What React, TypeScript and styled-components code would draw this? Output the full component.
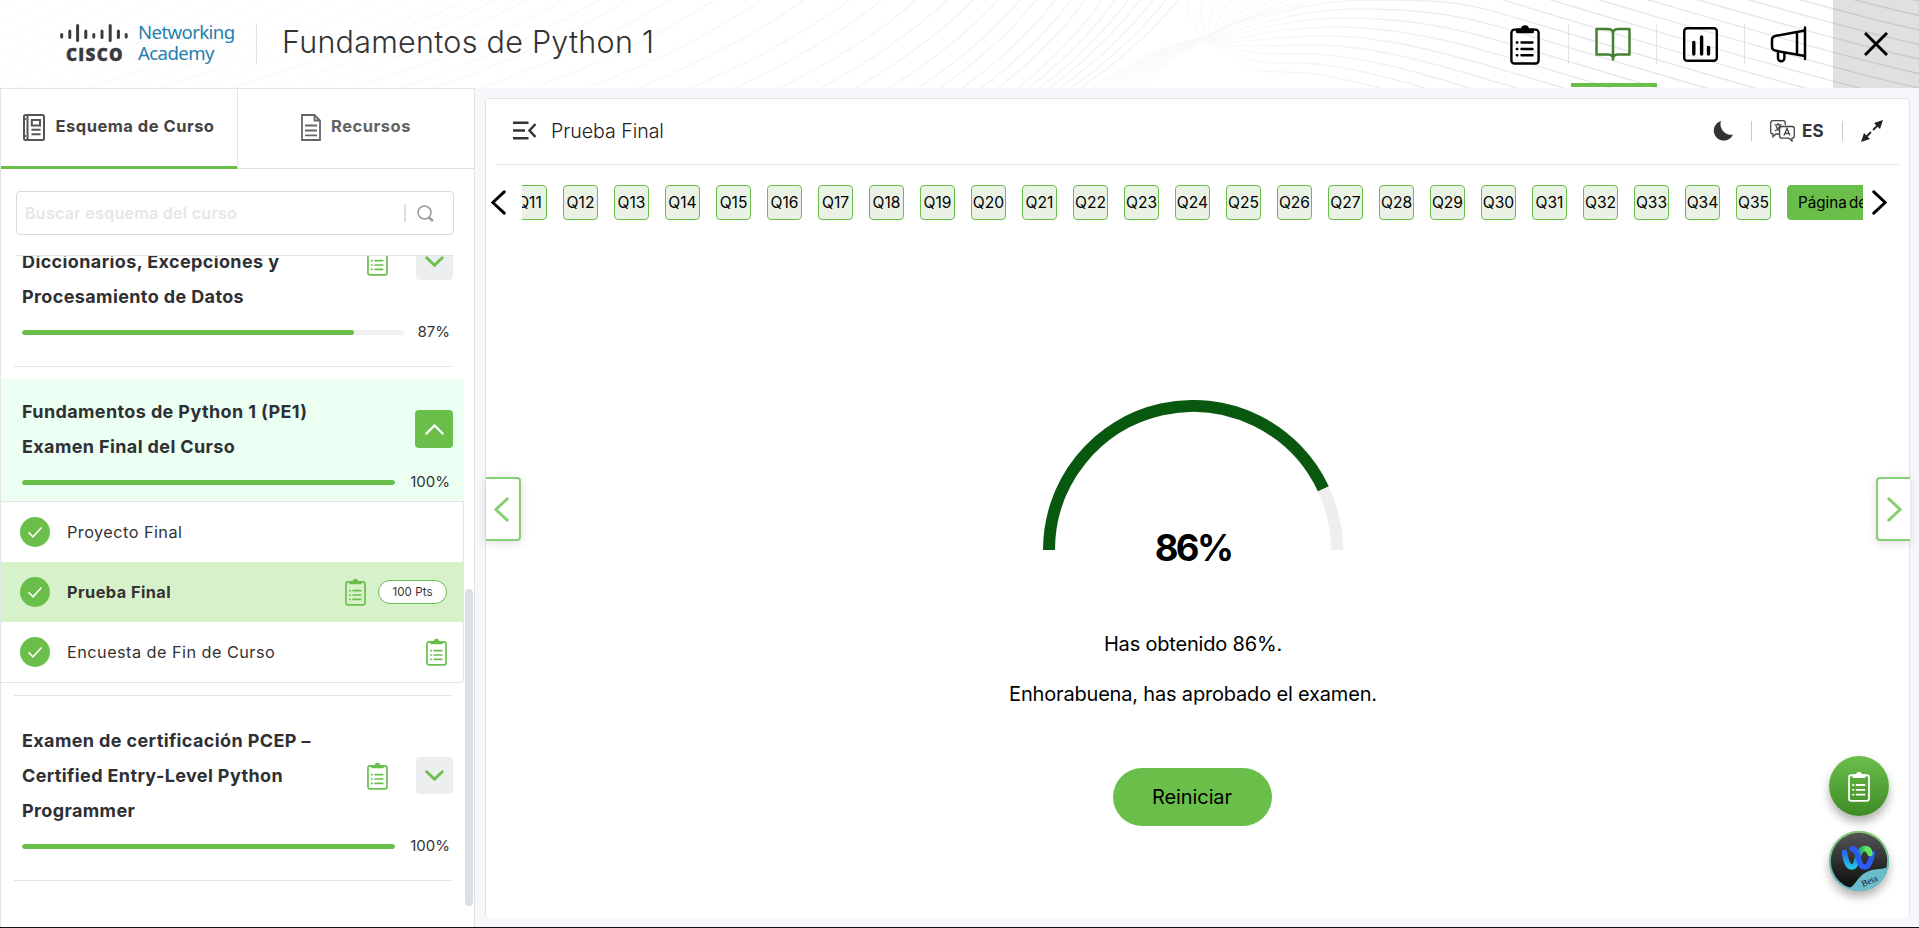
import React from "react";
import styled, { createGlobalStyle, css } from "styled-components";

const GREEN = "#6abf4b";
const LINE = "#e3e4e6";

const GlobalStyle = createGlobalStyle`
  * { box-sizing: border-box; }
  body { margin: 0; background: #f5f7fa; font-family: Inter, "Liberation Sans", sans-serif; color: #333; }
  button { font-family: inherit; padding: 0; }
`;

const Page = styled.div`
  display: flex;
  flex-direction: column;
  height: 928px;
  overflow: hidden;
  border-bottom: 1px solid #111;
`;

/* ---------- header ---------- */

const Header = styled.header`
  position: relative;
  display: flex;
  flex: none;
  height: 88px;
  background: #fff;
  padding-left: 60px;
`;

const HeaderWaves = styled.svg`
  position: absolute;
  inset: 0;
  width: 1919px;
  height: 88px;
`;

const Brand = styled.div`
  position: relative;
  display: flex;
  height: 40px;
  width: 197px;
  margin-top: 24px;
  border-right: 1px solid #dfe1e3;
`;

const CiscoMark = styled.div`
  width: 68px;
  margin-right: 10px;
  svg { display: block; }
`;

const CiscoWord = styled.div`
  font: 800 17px/18px "Open Sans", sans-serif;
  letter-spacing: 1.3px;
  color: #3b3b3d;
  -webkit-text-stroke: 0.4px #3b3b3d;
  padding-left: 6px;
  margin-top: 2px;
`;

const Academy = styled.div`
  font: 400 18.6px/21px "Noto Sans", sans-serif;
  letter-spacing: -0.6px;
  color: #1f80ad;
  margin-top: -3px;
  white-space: nowrap;
`;

const CourseTitle = styled.h1`
  position: relative;
  flex: 1;
  margin: 0 0 0 25px;
  font-size: 30.5px;
  font-weight: 300;
  line-height: 84px;
  letter-spacing: 0.26px;
  color: #333;
`;

const Nav = styled.nav`
  position: relative;
  display: flex;
`;

const NavItem = styled.button<{ $active?: boolean }>`
  position: relative;
  display: flex;
  align-items: center;
  justify-content: center;
  width: 88px;
  height: 88px;
  border: 0;
  background: none;
  color: ${(p) => (p.$active ? "#468033" : "#000")};
  &:nth-child(n + 3) { padding-right: 2px; }
  &:not(:nth-child(4))::after {
    content: "";
    position: absolute;
    right: 0;
    top: 24px;
    width: 1px;
    height: 40px;
    background: #e1e3e5;
  }
  ${(p) =>
    p.$active &&
    css`
      &::before {
        content: "";
        position: absolute;
        left: 2px;
        right: 0;
        bottom: 1px;
        height: 4px;
        background: ${GREEN};
      }
    `}
`;

const CloseButton = styled.button`
  display: flex;
  align-items: center;
  justify-content: center;
  width: 86px;
  height: 88px;
  border: 0;
  background: rgba(0, 0, 0, 0.12);
`;

/* ---------- sidebar ---------- */

const Body = styled.div`
  display: flex;
  flex: 1;
  min-height: 0;
`;

const Sidebar = styled.aside`
  position: relative;
  display: flex;
  flex-direction: column;
  flex: none;
  width: 475px;
  background: #fff;
  border: 1px solid ${LINE};
  border-bottom: 0;
`;

const Tabs = styled.div`
  display: flex;
  height: 80px;
`;

const Tab = styled.button<{ $active?: boolean }>`
  display: flex;
  align-items: center;
  justify-content: center;
  flex: 1;
  gap: 10px;
  border: 0;
  padding-bottom: ${(p) => (p.$active ? "1px" : "3px")};
  background: none;
  font-size: 16.5px;
  font-weight: 700;
  letter-spacing: 0.5px;
  color: ${(p) => (p.$active ? "#444" : "#636363")};
  border-bottom: ${(p) => (p.$active ? `3px solid ${GREEN}` : "1px solid #dcdfe6")};
  & + & { border-left: 1px solid ${LINE}; }
`;

const TabLabel = styled.span`
  padding-bottom: 2px;
`;

const SearchBox = styled.div`
  display: flex;
  align-items: center;
  height: 44px;
  width: 438px;
  margin: 22px 0 0 15px;
  padding: 0 19px 0 8px;
  border: 1px solid #d9dadc;
  border-radius: 4px;
  font-size: 16px;
  font-weight: 600;
  letter-spacing: 0.3px;
  color: #e6e6e6;
`;

const SearchText = styled.span`
  flex: 1;
`;

const SearchBar = styled.span`
  width: 2px;
  height: 18px;
  margin-right: 11px;
  background: #e0e0e0;
`;

const Outline = styled.div`
  flex: 1;
  min-height: 0;
  overflow: hidden;
  margin-top: 20px;
`;

const OutlineTop = styled.div`
  height: 1px;
  width: 438px;
  margin: 0 0 0 15px;
  background: ${LINE};
`;

const OutlineScroll = styled.div`
  height: 671px;
  overflow: hidden;
`;

const Module = styled.section<{ $open?: boolean; $scrolled?: boolean }>`
  width: 463px;
  padding: 15px 10px 0 21px;
  background: ${(p) => (p.$open ? "#ebfff3" : "#fff")};
  margin-top: ${(p) => (p.$scrolled ? "-62px" : "0")};
`;

const ModuleHead = styled.div`
  display: flex;
  align-items: center;
`;

const ModuleTitle = styled.h2<{ $continued?: boolean }>`
  flex: 1;
  margin: 0;
  padding-top: ${(p) => (p.$continued ? "35px" : "0")};
  font-size: 18px;
  font-weight: 700;
  line-height: 35px;
  letter-spacing: 0.38px;
  white-space: nowrap;
  color: #2f3033;
`;

const Toggle = styled.button<{ $open?: boolean }>`
  display: flex;
  align-items: center;
  justify-content: center;
  width: ${(p) => (p.$open ? "38px" : "37px")};
  height: ${(p) => (p.$open ? "38px" : "37px")};
  margin: 0 1px 0 28px;
  border: 0;
  border-radius: 4px;
  background: ${(p) => (p.$open ? GREEN : "#edeef0")};
  color: ${(p) => (p.$open ? "#fff" : GREEN)};
`;

const ProgressRow = styled.div`
  display: flex;
  align-items: center;
  height: 37px;
  padding-right: 4px;
`;

const Track = styled.div`
  flex: 1;
  height: 5px;
  border-radius: 3px;
  background: #f0f0f0;
  overflow: hidden;
`;

const Fill = styled.div`
  height: 100%;
  border-radius: 3px;
  background: ${GREEN};
`;

const Percent = styled.span<{ $full: boolean }>`
  width: ${(p) => (p.$full ? "55px" : "46px")};
  padding-bottom: 3px;
  text-align: right;
  font-size: 15px;
`;

const Rule = styled.hr`
  width: 438px;
  height: 1px;
  margin: 15px 0 12px 13px;
  border: 0;
  background: ${LINE};
`;

const Lessons = styled.div`
  width: 463px;
  height: 182px;
  border: 1px solid ${LINE};
  border-left: 0;
  border-radius: 0 0 4px 0;
  & + hr { margin-top: 12px; }
`;

const Lesson = styled.div<{ $current?: boolean }>`
  display: flex;
  align-items: center;
  height: 60px;
  padding: 0 16px 0 19px;
  font-size: 16.3px;
  letter-spacing: 0.45px;
  font-weight: ${(p) => (p.$current ? 700 : 400)};
  background: ${(p) => (p.$current ? "#d7f2ca" : "transparent")};
`;

const LessonName = styled.span`
  flex: 1;
  margin-left: 17px;
`;

const Points = styled.span`
  display: flex;
  align-items: center;
  justify-content: center;
  width: 69px;
  height: 24px;
  margin-left: 12px;
  border: 1px solid ${GREEN};
  border-radius: 12px;
  background: #fff;
  font-size: 11.5px;
  letter-spacing: 0.1px;
  font-weight: 400;
`;

const Scrollbar = styled.div`
  position: absolute;
  right: 1px;
  top: 500px;
  width: 8px;
  height: 317px;
  border-radius: 4px;
  background: #dcdfe6;
`;

/* ---------- main card ---------- */

const Card = styled.main`
  position: relative;
  display: flex;
  flex-direction: column;
  width: 1425px;
  height: 820px;
  margin: 10px 0 0 10px;
  border: 1px solid ${LINE};
  border-bottom: 0;
  border-radius: 4px;
  background: #fff;
`;

const CardBar = styled.div`
  display: flex;
  align-items: center;
  height: 66px;
  margin: 0 10px;
  padding: 0 16px 2px 17px;
  border-bottom: 1px solid ${LINE};
`;

const PageName = styled.div`
  flex: 1;
  margin-left: 14px;
  font-size: 19.6px;
  font-weight: 300;
  letter-spacing: -0.05px;
  color: #222;
`;

const Tool = styled.span`
  display: flex;
  align-items: center;
  gap: 7px;
  font-size: 17px;
  font-weight: 700;
  letter-spacing: 0.3px;
`;

const ToolDivider = styled.span`
  width: 1px;
  height: 20px;
  margin: 0 18px;
  background: #c9cacc;
`;

const QuestionNav = styled.div`
  display: flex;
  align-items: center;
  height: 75px;
  padding: 0 22px 0 5px;
  color: #000;
`;

const QuestionStrip = styled.div`
  display: flex;
  flex: none;
  gap: 16px;
  width: 1341px;
  margin-left: 16px;
  margin-right: auto;
  overflow: hidden;
`;

const Question = styled.button<{ $final?: boolean; $cut?: boolean }>`
  flex: none;
  width: ${(p) => (p.$final ? "170px" : "35px")};
  height: 35px;
  margin-left: ${(p) => (p.$cut ? "-10px" : "0")};
  padding-left: ${(p) => (p.$final ? "10px" : "0")};
  text-align: ${(p) => (p.$final ? "left" : "center")};
  border: 1px solid ${GREEN};
  border-radius: 4px;
  background: ${(p) => (p.$final ? GREEN : "#eaf2e6")};
  color: #000;
  font-size: ${(p) => (p.$final ? "15.2px" : "15.6px")};
  word-spacing: ${(p) => (p.$final ? "-2px" : "0")};
  white-space: nowrap;
`;

const Result = styled.div`
  display: flex;
  flex-direction: column;
  align-items: center;
  width: 1414px;
  padding-top: 160px;
  color: #000;
`;

const Score = styled.div`
  height: 50px;
  margin-top: -27px;
  line-height: 50px;
  font-size: 36.5px;
  font-weight: 700;
  letter-spacing: -2.6px;
`;

const Message = styled.p`
  margin: 0;
  height: 50px;
  line-height: 50px;
  font-size: 20px;
  letter-spacing: -0.18px;
  &:first-of-type { margin-top: 46px; }
`;

const Restart = styled.button`
  width: 159px;
  height: 58px;
  margin: 49px 2px 0 0;
  border: 0;
  border-radius: 29px;
  background: ${GREEN};
  color: #000;
  font-size: 20px;
  letter-spacing: -0.1px;
`;

const Pager = styled.button<{ $side: "left" | "right" }>`
  position: absolute;
  top: 378px;
  ${(p) => p.$side}: ${(p) => (p.$side === "left" ? "0" : "-1px")};
  display: flex;
  align-items: center;
  justify-content: center;
  width: ${(p) => (p.$side === "left" ? "35px" : "34px")};
  height: 64px;
  padding-right: ${(p) => (p.$side === "left" ? "2px" : "0")};
  border: 2px solid #87cf74;
  border-${(p) => p.$side}: 0;
  border-radius: ${(p) => (p.$side === "left" ? "0 4px 4px 0" : "4px 0 0 4px")};
  background: #fff;
  color: #87cf74;
  box-shadow: 0 2px 10px rgba(0, 0, 0, 0.14);
`;

const Floating = styled.div`
  position: absolute;
  right: 20px;
  top: 657px;
  display: flex;
  flex-direction: column;
  gap: 15px;
`;

const Fab = styled.button`
  display: flex;
  align-items: center;
  justify-content: center;
  width: 60px;
  height: 60px;
  border: 0;
  border-radius: 50%;
  background: linear-gradient(#6abf4b, #3f8a26);
  box-shadow: 0 6px 10px rgba(0, 0, 0, 0.3);
`;

/* ---------- drawings ---------- */

/* x at the top edge of the header -> x at its bottom edge, for the sweeping lines */
const SWEEP = [[0, -230], [465, 230], [599, 400], [849, 690], [999, 890], [1036, 940], [1102, 1018], [1180, 1082], [1290, 1138]];

const sweepBottom = (t: number) => {
  const i = Math.max(1, SWEEP.findIndex(([x]) => x >= t));
  const [x0, y0] = SWEEP[i - 1];
  const [x1, y1] = SWEEP[i];
  return y0 + ((t - x0) / (x1 - x0)) * (y1 - y0);
};

const Waves = () => {
  const tops = [465, 495, 526, 563, 599, 628, 669, 714, 761, 804, 849, 882, 916, 947, 973, 998, 1020, 1036, 1055, 1071, 1085, 1102, 1115, 1128, 1140, 1153, 1166, 1178];
  const left = tops.map((t) => {
    const b = sweepBottom(t);
    return `M${b} 88Q${b + (t - b) * 0.62} 46 ${t} 0`;
  });
  const knot = Array.from({ length: 10 }, (_, i) => {
    const t = 1190 + i * 13;
    return `M${1090 + i * 5.3} 88C${1140 + i * 4} ${58 - i * 0.8} ${1172 + i * 3} ${42 + i * 0.4} ${1192 + i * 3} ${41 - i}S${t - 12} 8 ${t + i} 0`;
  });
  const far = Array.from({ length: 13 }, (_, i) => `M${i * 36 - 200} 88Q${i * 36 - 70} 46 ${i * 36 + 10} 0`);
  const right = Array.from({ length: 9 }, (_, j) => {
    const px = 1367 - 10 * j;
    const py = 9 * j;
    const y = 13 + 14 * j;
    return `M1205 42C${1240 + j * 3} ${22 + py * 0.6} ${px - 60} ${py} ${px} ${py}S1455 ${y - 13} 1500 ${y}S1800 ${y + 92} 1919 ${y + 118}`;
  });
  const upper = Array.from({ length: 10 }, (_, j) => {
    const y = -1 - 14.5 * j;
    return `M1380 ${y - 20}Q1450 ${y - 15} 1500 ${y}S1800 ${y + 92} 1919 ${y + 118}`;
  });
  return (
    <HeaderWaves viewBox="0 0 1919 88" fill="none" strokeWidth="1.3">
      <defs>
        <linearGradient id="fan" gradientUnits="userSpaceOnUse" x1="1200" x2="1600" y1="0" y2="0">
          <stop offset="0" stopColor="#fafbfc" />
          <stop offset="0.4" stopColor="#f0f3f6" />
          <stop offset="1" stopColor="#dfe5ea" />
        </linearGradient>
        <linearGradient id="sweep" gradientUnits="userSpaceOnUse" x1="300" x2="1000" y1="0" y2="0">
          <stop offset="0" stopColor="#fafafa" />
          <stop offset="1" stopColor="#f1f3f6" />
        </linearGradient>
      </defs>
      <path stroke="#fafafa" d={far.join("")} />
      <path stroke="url(#sweep)" d={left.join("")} />
      <path stroke="#f6f8fa" strokeWidth="1" d={knot.join("")} />
      <path stroke="url(#fan)" d={right.join("")} />
      <path stroke="url(#fan)" d={upper.join("")} />
    </HeaderWaves>
  );
};

const CiscoBars = () => (
  <svg width="68" height="20" viewBox="0 0 68 20" stroke="#3b3b3d" strokeWidth="3" strokeLinecap="round">
    <path d="M1.7 10.5v2.6M9.8 7v6.5M17.6 1.5v15M25.8 7v6.5M33.8 10.5v2.6M42 7v6.5M50.2 1.5v15M58.4 7v6.5M66.2 10.5v2.6" />
  </svg>
);

const Clipboard = ({ w, h, color = GREEN, line = 2 }: { w: number; h: number; color?: string; line?: number }) => (
  <svg width={w} height={h} viewBox="0 0 30 40" preserveAspectRatio="none" fill="none" stroke={color} strokeWidth={line}>
    <rect x="1.4" y="5.5" width="27.2" height="33" rx="3" />
    <path fill={color} stroke="none" d="M6 4.5h4.8a4.3 4.3 0 0 1 8.4 0H24v3q0 1.5-1.5 1.5h-15Q6 9 6 7.5z" />
    <path strokeLinecap="round" d="M11.5 18h11M11.5 24.3h11M11.5 30.5h11M6.8 18h.6M6.8 24.3h.6M6.8 30.5h.6" />
  </svg>
);

const BookIcon = () => (
  <svg width="36" height="34" viewBox="0 0 36 34" fill="none" stroke="currentColor" strokeWidth="2.5" strokeLinejoin="round">
    <path d="M18 6.5Q18 2 12.5 2H1.5v25.5H13.5Q18 27.5 18 32.5Q18 27.5 22.5 27.5H34.5V2H23.5Q18 2 18 6.5V32" />
  </svg>
);

const ChartIcon = () => (
  <svg width="35" height="35" viewBox="0 0 35 35" fill="none" stroke="currentColor">
    <rect x="1.2" y="1.2" width="32.6" height="32.6" rx="3" strokeWidth="2.4" />
    <path strokeWidth="3.4" strokeLinecap="round" d="M10.8 15.5V27M18.6 10V27M25.5 20.5V27" />
  </svg>
);

const MegaphoneIcon = () => (
  <svg width="37" height="38" viewBox="0 0 37 38" fill="none" stroke="currentColor" strokeWidth="2.5" strokeLinecap="round" strokeLinejoin="round">
    <path d="M35 2.5V34M35 5.5L6 10.8Q2 11.5 2 15V22Q2 25 6 25.8L35 31M27 7V29.5M8 26.5V33a3.2 3.2 0 0 0 6.4 0V28" />
  </svg>
);

const CloseIcon = () => (
  <svg width="24" height="24" viewBox="0 0 24 24" stroke="#000" strokeWidth="3">
    <path d="M1 1L23 23M23 1L1 23" />
  </svg>
);

const OutlineIcon = () => (
  <svg width="22" height="27" viewBox="0 0 22 27" fill="none" stroke="#555" strokeWidth="2">
    <rect x="1" y="1" width="20" height="25" rx="1.5" />
    <path d="M4.5 1v25M8.5 15.8h9M8.5 20.3h9M1 5h2M1 22h2" />
    <rect x="8.8" y="6" width="8.2" height="5.5" />
  </svg>
);

const DocIcon = () => (
  <svg width="20" height="27" viewBox="0 0 20 27" fill="none" stroke="#666" strokeWidth="1.8">
    <path d="M1 1h12.5L19 6.5V26H1zM13.5 1v5.5H19M4 11.5h12M4 16.5h12M4 21.3h12" />
  </svg>
);

const SearchIcon = () => (
  <svg width="17" height="17" viewBox="0 0 17 17" fill="none" stroke="#999" strokeWidth="1.5">
    <circle cx="7.5" cy="7.5" r="6.5" />
    <path strokeWidth="2.4" d="M12 12.5L16 16" />
  </svg>
);

const Check = () => (
  <svg width="30" height="30" viewBox="0 0 30 30" fill="none">
    <circle cx="15" cy="15" r="15" fill={GREEN} />
    <path stroke="#fff" strokeWidth="1.5" d="M8.5 15.3L13 19.8L21.5 10.5" />
  </svg>
);

const Chevron = ({ d, w, h, s }: { d: "up" | "down" | "left" | "right"; w: number; h: number; s: number }) => {
  const m = s / 2 + 0.3;
  const paths = {
    up: `M${m} ${h - m}L${w / 2} ${m}L${w - m} ${h - m}`,
    down: `M${m} ${m}L${w / 2} ${h - m}L${w - m} ${m}`,
    left: `M${w - m} ${m}L${m} ${h / 2}L${w - m} ${h - m}`,
    right: `M${m} ${m}L${w - m} ${h / 2}L${m} ${h - m}`,
  };
  return (
    <svg width={w} height={h} fill="none" stroke="currentColor" strokeWidth={s} strokeLinecap="round">
      <path d={paths[d]} />
    </svg>
  );
};

const MenuIcon = () => (
  <svg width="24" height="19" viewBox="0 0 24 19" fill="none" stroke="#333" strokeWidth="2.5">
    <path d="M0 1.7h15.5M0 9.5h12M0 17.3h15.5M22.5 3L16.5 9.5L22.5 16" />
  </svg>
);

const MoonIcon = () => (
  <svg width="20" height="20" viewBox="0 0 20 20" fill="#333">
    <path d="M8 0A10 10 0 1 0 20 13.5A10.5 10.5 0 0 1 8 0z" />
  </svg>
);

const TranslateIcon = () => (
  <svg width="25" height="22" viewBox="0 0 25 22" fill="none" stroke="#444" strokeWidth="1.3">
    <path d="M9 14H6l-3 2.8V14Q.7 14 .7 12V3Q.7.7 3 .7H13Q15.3.7 15.3 3V5" />
    <path d="M12 6.5H22Q24.3 6.5 24.3 9V16Q24.3 18 22 18.2V21L19 18.2H12Q9.6 18.2 9.6 16V9Q9.6 6.5 12 6.5z" />
    <path d="M14 15.5L17 8.5L20 15.5M15 13.5h4M4.5 4.8h7M8 3v2M10 5Q9 9.5 4.8 11M6 6Q7 9 9 10.5" />
  </svg>
);

const ExpandIcon = () => (
  <svg width="22" height="22" viewBox="0 0 22 22" fill="#222">
    <path d="M22 0L13 3L19 9zM0 22L3 13L9 19z" />
    <path stroke="#222" strokeWidth="1.8" d="M5 17L10 12M12 10L17 5" />
  </svg>
);

const Gauge = ({ value }: { value: number }) => {
  const a = Math.PI * (1 - value / 100);
  const x = 150 + 144 * Math.cos(a);
  const y = 150 - 144 * Math.sin(a);
  return (
    <svg width="300" height="150" viewBox="0 0 300 150" fill="none" strokeWidth="12">
      <path stroke="#eee" d="M6 150A144 144 0 0 1 294 150" />
      <path stroke="#08590f" d={`M6 150A144 144 0 0 1 ${x} ${y}`} />
    </svg>
  );
};

const AssistantIcon = () => (
  <svg width="60" height="60" viewBox="0 0 60 60" fill="none">
    <defs>
      <linearGradient id="ring" x1="0" y1="0" x2="0" y2="1">
        <stop offset="0" stopColor="#86c96b" />
        <stop offset="1" stopColor="#5fb5dd" />
      </linearGradient>
      <linearGradient id="dark" x1="0" y1="0" x2="0" y2="1">
        <stop offset="0" stopColor="#555" />
        <stop offset="1" stopColor="#0a0a0a" />
      </linearGradient>
      <linearGradient id="cyan" x1="0" y1="0" x2="0" y2="1">
        <stop offset="0" stopColor="#2a6cf0" />
        <stop offset="1" stopColor="#22c3e6" />
      </linearGradient>
      <linearGradient id="lime" x1="0" y1="0" x2="1" y2="0">
        <stop offset="0" stopColor="#1a8f7c" />
        <stop offset="1" stopColor="#63f05c" />
      </linearGradient>
    </defs>
    <circle cx="30" cy="30" r="30" fill="url(#ring)" />
    <circle cx="30" cy="30" r="28.2" fill="url(#dark)" />
    <path fill="#6abccb" d="M20 57C28 55 28 41 46 38.5Q53 38 58.5 36.5A30 30 0 0 1 20 58.5z" />
    <g strokeWidth="5.5" strokeLinecap="round">
      <path stroke="url(#lime)" d="M27 32C29 24 31 17.5 36 17.5Q40 17.5 41 22" />
      <path stroke="url(#cyan)" d="M15.500 21.5C17 31 19 36 23 36Q26 36 28 30" />
      <path stroke="#2a5cf2" d="M23 17.8C31 17.8 28 36 35.5 36C40 36 42 29 43.5 22.5" />
    </g>
    <path stroke="#63e85c" strokeWidth="5.5" strokeLinecap="round" d="M38 18.5Q40.5 20 41 22.5" />
    <text x="34" y="56" transform="rotate(-24 34 56)" fontFamily="Liberation Serif, serif" fontSize="9" fill="#123">Beta</text>
  </svg>
);

/* ---------- page ---------- */

const Progress = ({ value }: { value: number }) => (
  <ProgressRow>
    <Track>
      <Fill style={{ width: `${value}%` }} />
    </Track>
    <Percent $full={value === 100}>{value}%</Percent>
  </ProgressRow>
);

const questions = Array.from({ length: 25 }, (_, i) => `Q${i + 11}`);

export default function App() {
  return (
    <Page>
      <GlobalStyle />
      <Header>
        <Waves />
        <Brand>
          <CiscoMark>
            <CiscoBars />
            <CiscoWord>CISCO</CiscoWord>
          </CiscoMark>
          <Academy>
            Networking
            <br />
            Academy
          </Academy>
        </Brand>
        <CourseTitle>Fundamentos de Python 1</CourseTitle>
        <Nav>
          <NavItem><Clipboard w={30} h={41} color="#000" line={2.4} /></NavItem>
          <NavItem $active><BookIcon /></NavItem>
          <NavItem><ChartIcon /></NavItem>
          <NavItem><MegaphoneIcon /></NavItem>
          <CloseButton><CloseIcon /></CloseButton>
        </Nav>
      </Header>
      <Body>
        <Sidebar>
          <Tabs>
            <Tab $active><OutlineIcon /><TabLabel>Esquema de Curso</TabLabel></Tab>
            <Tab><DocIcon /><TabLabel>Recursos</TabLabel></Tab>
          </Tabs>
          <SearchBox>
            <SearchText>Buscar esquema del curso</SearchText>
            <SearchBar />
            <SearchIcon />
          </SearchBox>
          <Outline>
            <OutlineTop />
            <OutlineScroll>
              <Module $scrolled>
                <ModuleHead>
                  <ModuleTitle $continued>
                    Diccionarios, Excepciones y<br />Procesamiento de Datos
                  </ModuleTitle>
                  <Clipboard w={21} h={28} line={2.4} />
                  <Toggle><Chevron d="down" w={19} h={11} s={2.8} /></Toggle>
                </ModuleHead>
                <Progress value={87} />
              </Module>
              <Rule />
              <Module $open>
                <ModuleHead>
                  <ModuleTitle>
                    Fundamentos de Python 1 (PE1)<br />Examen Final del Curso
                  </ModuleTitle>
                  <Toggle $open><Chevron d="up" w={19} h={11} s={2.2} /></Toggle>
                </ModuleHead>
                <Progress value={100} />
              </Module>
              <Lessons>
                <Lesson><Check /><LessonName>Proyecto Final</LessonName></Lesson>
                <Lesson $current>
                  <Check />
                  <LessonName>Prueba Final</LessonName>
                  <Clipboard w={21} h={28} line={2.4} />
                  <Points>100 Pts</Points>
                </Lesson>
                <Lesson>
                  <Check />
                  <LessonName>Encuesta de Fin de Curso</LessonName>
                  <Clipboard w={21} h={28} line={2.4} />
                </Lesson>
              </Lessons>
              <Rule />
              <Module>
                <ModuleHead>
                  <ModuleTitle>
                    Examen de certificación PCEP –<br />Certified Entry-Level Python<br />Programmer
                  </ModuleTitle>
                  <Clipboard w={21} h={28} line={2.4} />
                  <Toggle><Chevron d="down" w={19} h={11} s={2.8} /></Toggle>
                </ModuleHead>
                <Progress value={100} />
              </Module>
              <Rule />
            </OutlineScroll>
          </Outline>
          <Scrollbar />
        </Sidebar>
        <Card>
          <CardBar>
            <MenuIcon />
            <PageName>Prueba Final</PageName>
            <Tool><MoonIcon /></Tool>
            <ToolDivider />
            <Tool><TranslateIcon />ES</Tool>
            <ToolDivider />
            <Tool><ExpandIcon /></Tool>
          </CardBar>
          <QuestionNav>
            <Chevron d="left" w={15} h={25} s={3} />
            <QuestionStrip>
              {questions.map((q, i) => (
                <Question key={q} $cut={i === 0}>{q}</Question>
              ))}
              <Question $final>Página de</Question>
            </QuestionStrip>
            <Chevron d="right" w={15} h={25} s={3} />
          </QuestionNav>
          <Result>
            <Gauge value={86} />
            <Score>86%</Score>
            <Message>Has obtenido 86%.</Message>
            <Message>Enhorabuena, has aprobado el examen.</Message>
            <Restart>Reiniciar</Restart>
          </Result>
          <Pager $side="left"><Chevron d="left" w={15} h={25} s={3} /></Pager>
          <Pager $side="right"><Chevron d="right" w={15} h={25} s={3} /></Pager>
          <Floating>
            <Fab><Clipboard w={22} h={31} color="#fff" line={2.4} /></Fab>
            <Fab><AssistantIcon /></Fab>
          </Floating>
        </Card>
      </Body>
    </Page>
  );
}
